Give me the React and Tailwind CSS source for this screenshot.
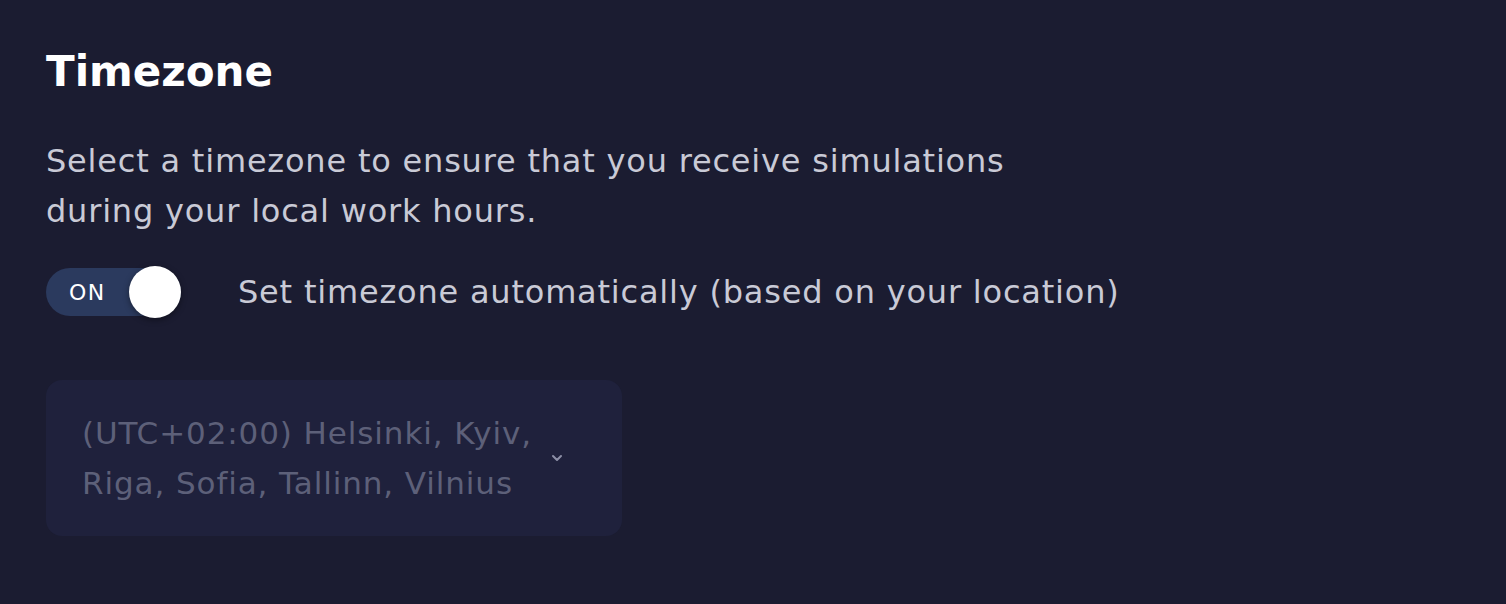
export default function App() {
  return (
    <div
      className="min-h-[604px] w-full bg-[#1b1c31] px-[46px] pt-[44px]"
      style={{ fontFamily: '"DejaVu Sans", "Liberation Sans", sans-serif' }}
    >
      <h1 className="text-[42px] leading-[56px] font-bold text-white">
        Timezone
      </h1>
      <p className="mt-[36px] max-w-[1100px] text-[32px] leading-[50px] text-[#c9cad6] tracking-[0.8px]">
        Select a timezone to ensure that you receive simulations
        <br />
        during your local work hours.
      </p>
      <div className="mt-[32px] flex items-center gap-[57px]">
        <div className="relative flex h-[48px] w-[135px] items-center rounded-full bg-[#2b3a5e] pl-[23px]">
          <span className="text-[22px] text-white tracking-[1.5px]">ON</span>
          <span className="absolute right-0 top-1/2 h-[52px] w-[52px] -translate-y-1/2 rounded-full bg-white shadow-[0_2px_6px_rgba(0,0,0,0.4)]" />
        </div>
        <span className="text-[32px] text-[#c9cad6] tracking-[0.8px]">
          Set timezone automatically (based on your location)
        </span>
      </div>
      <div className="mt-[64px] flex h-[156px] w-[576px] items-center justify-between rounded-[16px] bg-[#1f213c] pl-[36px] pr-[59px]">
        <span className="text-[31px] leading-[50px] text-[#5d6079] tracking-[0.9px]">
          (UTC+02:00) Helsinki, Kyiv,
          <br />
          Riga, Sofia, Tallinn, Vilnius
        </span>
        <svg width="12" height="8" viewBox="0 0 12 8" fill="none">
          <path d="M2 2l4 4 4-4" stroke="#8c8fa6" strokeWidth="2" strokeLinecap="round" strokeLinejoin="round" />
        </svg>
      </div>
    </div>
  );
}
